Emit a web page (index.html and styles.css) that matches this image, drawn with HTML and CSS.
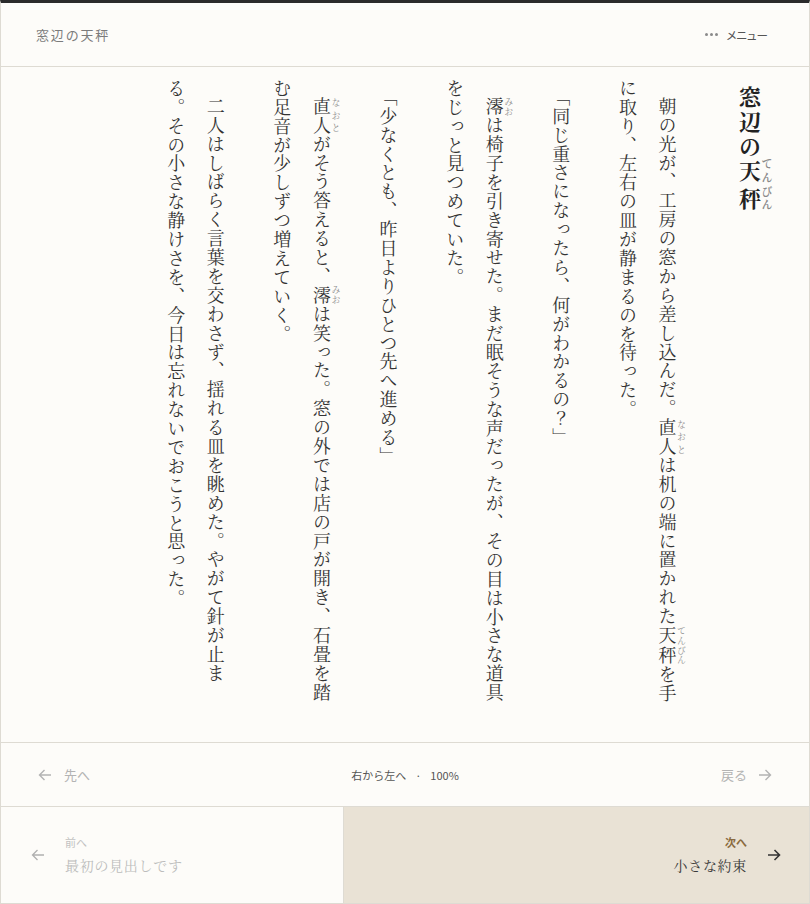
FILE: index.html
```html
<!DOCTYPE html>
<html lang="ja">
<head>
    <meta charset="UTF-8">
    <meta name="viewport" content="width=device-width, initial-scale=1.0">
    <title>窓辺の天秤</title>
    <link rel="stylesheet" href="styles.css">
</head>
<body>
    <div class="app">
        <!-- Top bar -->
        <header class="topbar">
            <span class="book-title">窓辺の天秤</span>
            <button class="menu" type="button">
                <span class="dots"><i></i><i></i><i></i></span>
                メニュー
            </button>
        </header>

        <!-- Vertical reading area -->
        <main class="reader">
            <h1 class="chapter-title">窓辺の<ruby>天秤<rt>てんびん</rt></ruby></h1>
            <p>朝の光が、工房の窓から差し込んだ。<ruby>直人<rt>なおと</rt></ruby>は机の端に置かれた<ruby>天秤<rt>てんびん</rt></ruby>を手に取り、左右の皿が静まるのを待った。</p>
            <p>「同じ重さになったら、何がわかるの？」</p>
            <p><ruby>澪<rt>みお</rt></ruby>は椅子を引き寄せた。まだ眠そうな声だったが、その目は小さな道具をじっと見つめていた。</p>
            <p>「少なくとも、昨日よりひとつ先へ進める」</p>
            <p><ruby>直人<rt>なおと</rt></ruby>がそう答えると、<ruby>澪<rt>みお</rt></ruby>は笑った。窓の外では店の戸が開き、石畳を踏む足音が少しずつ増えていく。</p>
            <p>二人はしばらく言葉を交わさず、揺れる皿を眺めた。やがて針が止まる。その小さな静けさを、今日は忘れないでおこうと思った。</p>
        </main>

        <!-- Page controls -->
        <nav class="pager">
            <a class="pager-link prev">
                <svg width="14" height="12" viewBox="0 0 14 12"><path d="M13 6H1.5M6.5 1L1.5 6l5 5" fill="none" stroke="currentColor" stroke-width="1.4"/></svg>
                先へ
            </a>
            <span class="pager-status">右から左へ<span class="sep">·</span>100%</span>
            <a class="pager-link next">
                戻る
                <svg width="14" height="12" viewBox="0 0 14 12"><path d="M1 6h11.5M7.5 1l5 5-5 5" fill="none" stroke="currentColor" stroke-width="1.4"/></svg>
            </a>
        </nav>

        <!-- Chapter navigation -->
        <div class="chapters">
            <a class="chap chap-prev">
                <svg width="14" height="12" viewBox="0 0 14 12"><path d="M13 6H1.5M6.5 1L1.5 6l5 5" fill="none" stroke="currentColor" stroke-width="1.3"/></svg>
                <span class="chap-text">
                    <span class="chap-label">前へ</span>
                    <span class="chap-name">最初の見出しです</span>
                </span>
            </a>
            <a class="chap chap-next">
                <span class="chap-text">
                    <span class="chap-label">次へ</span>
                    <span class="chap-name">小さな約束</span>
                </span>
                <svg width="14" height="12" viewBox="0 0 14 12"><path d="M1 6h11.5M7.5 1l5 5-5 5" fill="none" stroke="currentColor" stroke-width="1.6"/></svg>
            </a>
        </div>
    </div>
</body>
</html>
```

FILE: styles.css
```css
body {
    margin: 0;
    background-color: #fdfcf9;
    color: #333;
    font-family: "Noto Sans CJK JP", "Noto Sans", sans-serif;
}

.app {
    box-sizing: border-box;
    height: 904px;
    display: flex;
    flex-direction: column;
    border: 1px solid #dedbd3;
    border-top: 3px solid #2b2b2b;
    background-color: #fdfcf9;
    overflow: hidden;
}

/* Top bar */
.topbar {
    flex: none;
    height: 63px;
    display: flex;
    align-items: center;
    justify-content: space-between;
    padding: 0 41px 0 35px;
    border-bottom: 1px solid #dedbd3;
}

.book-title {
    font-size: 13px;
    letter-spacing: 0.14em;
    color: #7b7b7b;
}

.menu {
    display: flex;
    align-items: center;
    gap: 8px;
    padding: 0;
    border: 0;
    background: none;
    font: inherit;
    font-size: 11.5px;
    color: #555;
    font-feature-settings: "palt";
    cursor: pointer;
}

.dots {
    display: flex;
    gap: 2px;
}

.dots i {
    width: 3px;
    height: 3px;
    border-radius: 50%;
    background-color: #8a8a8a;
}

/* Reading area */
.reader {
    flex: none;
    box-sizing: border-box;
    height: 675px;
    padding: 12px 36px 36px 0;
    writing-mode: vertical-rl;
    overflow: hidden;
    font-family: "Noto Serif CJK JP", "Noto Serif JP", "IPAexMincho", "Noto Sans CJK JP", serif;
}

.chapter-title {
    margin: 0 0 0 41px;
    padding-top: 7px;
    font-size: 22px;
    line-height: 44px;
    letter-spacing: 0.12em;
    font-weight: 700;
    color: #222;
}

.reader p {
    margin: 0 0 0 1.5em;
    font-size: 18px;
    line-height: 2.2;
    letter-spacing: 0.05em;
    text-indent: 1em;
    text-spacing-trim: trim-start;
    color: #333;
}

.reader rt {
    color: #8a8a8a;
}

/* Page controls */
.pager {
    flex: none;
    height: 63px;
    display: grid;
    grid-template-columns: 1fr auto 1fr;
    align-items: center;
    padding: 0 37px 0 37px;
    border-top: 1px solid #dedbd3;
    border-bottom: 1px solid #dedbd3;
}

.pager-link {
    display: flex;
    align-items: center;
    gap: 12px;
    font-size: 13px;
    color: #b3b3b3;
    cursor: pointer;
}

.pager-link.next {
    justify-self: end;
    gap: 11px;
}

.pager-status {
    font-size: 11px;
    color: #555;
}

.pager-status .sep {
    margin: 0 9px;
}

/* Chapter navigation */
.chapters {
    flex: 1;
    display: grid;
    grid-template-columns: 343px 1fr;
}

.chap {
    display: flex;
    align-items: center;
    gap: 20px;
    cursor: pointer;
}

.chap-prev {
    padding-left: 30px;
    border-right: 1px solid #dedbd3;
    color: #b0b0b0;
}

.chap-next {
    justify-content: flex-end;
    padding-right: 28px;
    background-color: #e9e2d5;
    color: #333;
}

.chap-text {
    display: flex;
    flex-direction: column;
    gap: 4px;
}

.chap-next .chap-text {
    align-items: flex-end;
}

.chap-label {
    font-size: 11px;
    line-height: 16px;
    color: #c2c2c2;
}

.chap-next .chap-label {
    font-weight: 700;
    color: #8a6a3e;
}

.chap-name {
    font-family: "Noto Serif CJK JP", "Noto Serif JP", "IPAexMincho", "Noto Sans CJK JP", serif;
    font-size: 14px;
    line-height: 22px;
    letter-spacing: 0.05em;
    color: #bcbcbc;
}

.chap-next .chap-name {
    color: #3a3a3a;
}
```
